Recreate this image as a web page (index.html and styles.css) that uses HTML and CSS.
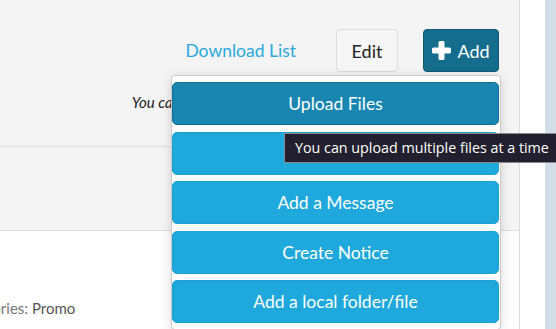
FILE: index.html
```html
<!DOCTYPE html>
<html lang="en">
<head>
    <meta charset="UTF-8">
    <meta name="viewport" content="width=device-width, initial-scale=1.0">
    <title>Folder</title>
    <link rel="stylesheet" href="styles.css">
</head>
<body>

<div class="page">
    <div class="main">
        <div class="toolbar">
            <div class="actions">
                <a href="#" class="link">Download List</a>
                <button class="btn btn-edit">Edit</button>
                <button class="btn btn-add">
                    <svg class="plus" width="19" height="19" viewBox="0 0 19 19">
                        <rect x="6.5" y="0" width="6" height="19" rx="1.5" fill="#fff"/>
                        <rect x="0" y="6.5" width="19" height="6" rx="1.5" fill="#fff"/>
                    </svg>
                    Add
                </button>
            </div>
            <p class="note">You can drag and drop files here to add them to this folder /</p>

            <div class="dropdown">
                <button class="menu-item active">Upload Files</button>
                <button class="menu-item">New Folder</button>
                <button class="menu-item">Add a Message</button>
                <button class="menu-item">Create Notice</button>
                <button class="menu-item">Add a local folder/file</button>
            </div>
        </div>
        <div class="filters"></div>
        <div class="content">
            <p class="meta"><span class="meta-label">Categories:</span> Promo</p>
        </div>
    </div>
    <div class="gutter"></div>
    <div class="sidebar"></div>

    <div class="tooltip">You can upload multiple files at a time</div>
</div>

</body>
</html>
```

FILE: styles.css
```css
body {
    margin: 0;
    font-family: Lato, "Open Sans", Arial, sans-serif;
    background-color: #fff;
    overflow: hidden;
}
.page {
    position: relative;
    display: flex;
    height: 329px;
    overflow: hidden;
}
.main {
    position: relative;
    width: 519px;
    border-right: 1px solid #ddd;
    flex-shrink: 0;
}
.gutter {
    width: 25px;
    flex-shrink: 0;
}
.sidebar {
    flex: 1;
    background-color: #d3dde5;
}
.toolbar {
    height: 146px;
    background-color: #f4f4f4;
    border-bottom: 1px solid #ddd;
}
.actions {
    display: flex;
    justify-content: flex-end;
    align-items: center;
    padding-top: 29px;
    padding-right: 20px;
}
.link {
    color: #2aa8df;
    text-decoration: none;
    font-size: 17.5px;
    margin-right: 40px;
}
.btn {
    height: 43px;
    border-radius: 4px;
    font-family: Lato, sans-serif;
    font-size: 18px;
    display: flex;
    align-items: center;
    justify-content: center;
    padding: 0;
}
.btn-edit {
    width: 62px;
    background-color: #f6f6f6;
    border: 1px solid #dcdcdc;
    color: #222;
    margin-right: 25px;
}
.btn-add {
    width: 76px;
    background-color: #146d8c;
    border: 1px solid #0f5a74;
    color: #fff;
    gap: 6px;
}
.plus {
    display: block;
}
.note {
    margin: 21px 19px 0 0;
    text-align: right;
    font-style: italic;
    font-size: 15px;
    color: #222;
}
.dropdown {
    position: absolute;
    top: 75px;
    left: 171px;
    width: 327px;
    padding: 6px 1px 6px 0;
    background-color: #fff;
    border: 1px solid #ccc;
    border-radius: 4px;
    box-shadow: 0 2px 12px rgba(0, 0, 0, 0.15);
    z-index: 2;
}
.menu-item {
    display: block;
    width: 100%;
    height: 43px;
    margin-bottom: 6.5px;
    background-color: #1ea8dc;
    border: 1px solid #1c9fd1;
    border-radius: 5px;
    color: #fff;
    font-family: Lato, sans-serif;
    font-size: 17.5px;
}
.menu-item:last-child {
    margin-bottom: 0;
}
.menu-item.active {
    background-color: #1886b1;
    border-color: #146f94;
}
.filters {
    height: 83px;
    background-color: #f4f4f4;
    border-bottom: 1px solid #ddd;
}
.content {
    padding-top: 68px;
}
.meta {
    margin: 0 0 0 -46px;
    font-size: 15px;
    color: #555;
}
.meta-label {
    color: #777;
}
.tooltip {
    position: absolute;
    top: 133px;
    left: 284px;
    width: 280px;
    height: 28px;
    padding-left: 10px;
    line-height: 28px;
    background-color: #221f2e;
    border: 1px solid #8a8a8a;
    color: #fff;
    font-family: "Open Sans", sans-serif;
    font-size: 14.3px;
    white-space: nowrap;
    z-index: 3;
}
```
